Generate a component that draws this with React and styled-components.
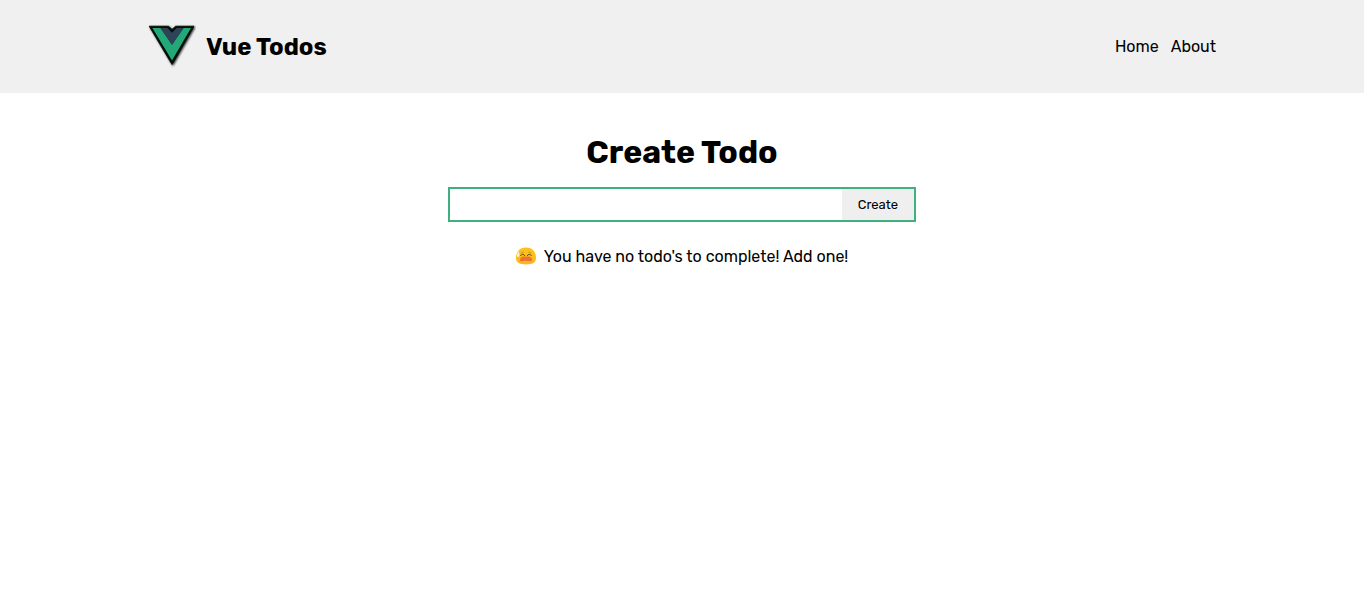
import React, { useState } from "react";
import styled, { createGlobalStyle } from "styled-components";

const GlobalStyle = createGlobalStyle`
  * { box-sizing: border-box; margin: 0; padding: 0; }
  body {
    font-family: Rubik, Roboto, "Liberation Sans", sans-serif;
    font-size: 16px;
    line-height: 19px;
    color: #000;
    background: #fff;
  }
`;

const Header = styled.header`
  background: #f0f0f0;
`;

const HeaderInner = styled.div`
  display: flex;
  align-items: center;
  justify-content: space-between;
  max-width: 1100px;
  min-height: 93px;
  margin: 0 auto;
  padding: 16px;
`;

const Branding = styled.div`
  display: flex;
  align-items: center;
  gap: 10px;
`;

const LogoSvg = styled.svg`
  width: 48px;
  height: 48px;
`;

const SiteTitle = styled.h2`
  font-size: 24px;
  line-height: 28px;
  font-weight: 700;
`;

const Nav = styled.nav`
  display: flex;
  gap: 12px;
`;

const NavLink = styled.a`
  color: inherit;
  text-decoration: none;
`;

const Main = styled.main`
  display: flex;
  flex-direction: column;
  align-items: center;
  max-width: 500px;
  margin: 0 auto;
  padding: 40px 16px;
`;

const Title = styled.h1`
  font-size: 32px;
  line-height: 38px;
  font-weight: 700;
  margin-bottom: 16px;
`;

const Form = styled.form`
  display: flex;
  width: 100%;
  height: 35px;
  border: 2px solid #41b080;
`;

const TodoInput = styled.input`
  flex: 1;
  min-width: 0;
  padding: 8px;
  border: 0;
  outline: 0;
  background: #fff;
  font: inherit;
`;

const CreateButton = styled.button`
  padding: 8px 16px;
  border: 0;
  background: #efefef;
  color: #000;
  font-family: inherit;
  font-size: 13px;
  line-height: 15px;
`;

const Message = styled.p`
  display: flex;
  align-items: center;
  gap: 8px;
  margin-top: 25px;
  font-size: 16px;
`;

const FaceSvg = styled.svg`
  width: 20px;
  height: 19px;
`;

function Logo() {
  return (
    <LogoSvg viewBox="0 0 48 48" aria-hidden="true">
      <defs>
        <filter id="shadow" x="-20%" y="-20%" width="140%" height="140%">
          <feDropShadow dx="1" dy="1" stdDeviation="1" floodOpacity="0.85" />
        </filter>
      </defs>
      <path d="M1.2 3.2H20.5L24 6.4L27.5 3.2H46L24 41.5Z" fill="#050a08" stroke="#050a08" strokeWidth="0.8" strokeLinejoin="round" filter="url(#shadow)" />
      <path d="M4.4 5H12.5L24 21.5L35.5 5H43L24 37.4Z" fill="#23a978" />
      <path d="M12.5 5H19.5L24 9.8L28.5 5H35.5L24 22Z" fill="#2d4357" />
    </LogoSvg>
  );
}

function WearyFace() {
  return (
    <FaceSvg viewBox="0 0 20 19" aria-hidden="true">
      <defs>
        <linearGradient id="skin" x1="0" y1="0" x2="0" y2="1">
          <stop offset="0.3" stopColor="#fcc21b" />
          <stop offset="1" stopColor="#fbb61f" />
        </linearGradient>
      </defs>
      <path d="M10 0.4C4 .4 0 4.6 0 10.8C0 15.8 3.5 17.5 10 17.5S20 15.8 20 10.8C20 4.6 16 .4 10 .4Z" fill="url(#skin)" />
      <path d="M2.6 4.2C.8 6.8 .5 8.7 1.2 9.6C2.4 10.6 3.8 9.5 3.4 7.7Z" fill="#fff4cf" />
      <path d="M5 6.3L7.4 5M15 6.3L12.6 5" fill="none" stroke="#9c7524" strokeWidth="0.6" strokeLinecap="round" />
      <path d="M4.6 8.6Q6.6 5.8 8.8 8.6M11.2 8.6Q13.4 5.8 15.4 8.6" fill="none" stroke="#5c431c" strokeWidth="1" strokeLinecap="round" />
      <path d="M5.2 10.2Q7 9 10 9.8Q13 9 14.8 10.2Q16.4 11.6 16 14Q13 14.6 10 13.8Q7 14.6 4 14Q3.6 11.6 5.2 10.2Z" fill="#f07038" />
    </FaceSvg>
  );
}

export default function App() {
  const [todo, setTodo] = useState("");
  return (
    <>
      <GlobalStyle />
      <Header>
        <HeaderInner>
          <Branding>
            <Logo />
            <SiteTitle>Vue Todos</SiteTitle>
          </Branding>
          <Nav>
            <NavLink href="#home">Home</NavLink>
            <NavLink href="#about">About</NavLink>
          </Nav>
        </HeaderInner>
      </Header>
      <Main>
        <Title>Create Todo</Title>
        <Form onSubmit={(e) => e.preventDefault()}>
          <TodoInput
            type="text"
            aria-label="New todo"
            value={todo}
            onChange={(e) => setTodo(e.target.value)}
          />
          <CreateButton type="submit">Create</CreateButton>
        </Form>
        <Message>
          <WearyFace />
          <span>You have no todo's to complete! Add one!</span>
        </Message>
      </Main>
    </>
  );
}
